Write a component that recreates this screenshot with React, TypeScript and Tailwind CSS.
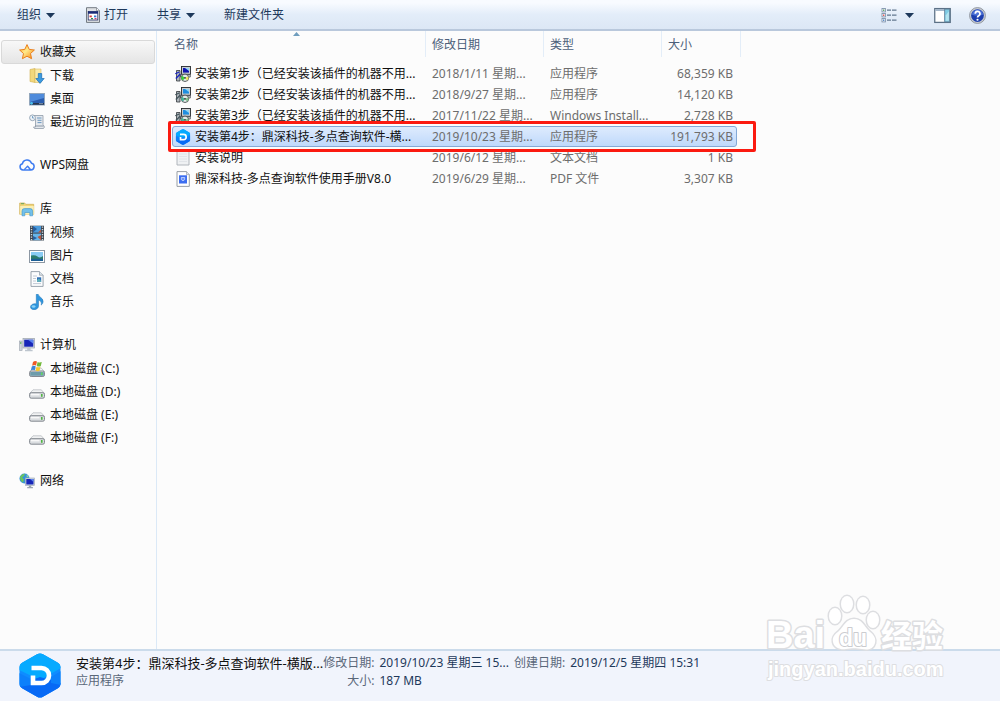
import type { ReactNode } from 'react'
import clsx from 'clsx'

type IconProps = { className?: string }

function Svg({ className = 'size-4', children }: IconProps & { children: ReactNode }) {
  return (
    <svg viewBox="0 0 16 16" className={clsx('shrink-0', className)} aria-hidden="true">
      {children}
    </svg>
  )
}

function Caret() {
  return (
    <svg viewBox="0 0 9 5" className="h-[5px] w-[9px] shrink-0" aria-hidden="true">
      <path d="M0 0h9L4.5 5z" fill="#1e395b" />
    </svg>
  )
}

const StarIcon = () => (
  <Svg>
    <defs>
      <linearGradient id="star" x1="0" y1="0" x2="1" y2="1">
        <stop offset="0" stopColor="#ffb52e" />
        <stop offset=".45" stopColor="#ffe98a" />
        <stop offset="1" stopColor="#f57f0a" />
      </linearGradient>
    </defs>
    <path d="M8 .6l2.2 4.8 5.2.6-3.9 3.5 1.1 5.2L8 12.2l-4.6 2.5 1.1-5.2L.6 6l5.2-.6z" fill="url(#star)" stroke="#ea7f1c" strokeWidth="1" strokeLinejoin="round" />
  </Svg>
)

const DownloadIcon = () => (
  <Svg>
    <path d="M1 1.5l5-1v14l-5-1z" fill="#f3d87c" stroke="#d2b04e" strokeWidth=".6" />
    <path d="M6 1h6v13.5H6z" fill="#f9e9a8" stroke="#d8bc62" strokeWidth=".6" />
    <path d="M9.3 5.5h3.4v5h2.5L11 15.4l-4.2-4.9h2.5z" fill="#3d9be0" stroke="#1b6fb8" strokeWidth=".7" />
  </Svg>
)

const DesktopIcon = () => (
  <Svg>
    <rect x=".5" y="2.5" width="15" height="11.5" fill="#2a5dae" stroke="#92a6bc" />
    <path d="M1 3h14v4L1 11z" fill="#4f8bdb" />
    <path d="M1 12h14v1.7H1z" fill="#27364c" />
    <circle cx="2.5" cy="12.3" r="1.4" fill="#4dc1ee" />
    <path d="M10 12.6h4" stroke="#9fb6d0" strokeWidth=".7" />
  </Svg>
)

const RecentIcon = () => (
  <Svg>
    <path d="M4.5 1.5h9.5v9l1.5 2.5-1 1.5H5.5l-1-1.5h2V6z" fill="#e4e8ed" stroke="#8f9ba8" strokeWidth=".8" />
    <path d="M8 4h4.5M8.5 6.3h4M8.5 8.6h4" stroke="#6a98c0" />
    <path d="M6 12h8.5" stroke="#8996a5" />
    <circle cx="3.5" cy="3.8" r="2.9" fill="#edf3f8" stroke="#8496a8" strokeWidth=".8" />
    <path d="M3.5 2v2H5" stroke="#4f85b5" strokeWidth=".7" fill="none" />
  </Svg>
)

const CloudIcon = () => (
  <Svg>
    <path d="M8.6 9.2l3.2 3.7H4a3.1 3.1 0 0 1-.6-6.1A4.7 4.7 0 0 1 12.5 6.2a3.4 3.4 0 0 1-.7 6.7" fill="none" stroke="#3e7cf0" strokeWidth="1.5" strokeLinejoin="round" strokeLinecap="round" />
    <path d="M5.2 12.6L8.6 9.2" fill="none" stroke="#3e7cf0" strokeWidth="1.3" />
  </Svg>
)

const LibraryIcon = () => (
  <Svg>
    <path d="M.7 2h5l1 1.3h8v10H.7z" fill="#f0d477" stroke="#cfae50" strokeWidth=".7" />
    <path d="M1.2 5h13.6v8.5H1.2z" fill="#faeeb4" />
    <path d="M2 2.7h3" stroke="#65a45b" />
    <path d="M3 14.8V10q0-2.4 2.4-2.4h5.8Q13.6 7.6 13.6 10v4.8h-2.8v-3.3H5.8v3.3z" fill="#73c0ea" stroke="#3a91c8" strokeWidth=".6" />
  </Svg>
)

const VideoIcon = () => (
  <Svg>
    <rect x="1" y=".7" width="14" height="14.8" fill="#3e4650" />
    <rect x="4" y="1" width="8" height="6.6" fill="#4b9bdc" />
    <rect x="4" y="8.6" width="8" height="6.6" fill="#67b5e8" />
    <path d="M4 1l4 3-4 3.6zM4 15.2V11l4 2z" fill="#275e9e" />
    <path d="M9 7.6l3-3v3zM8.5 12l3.5-2v5.2z" fill="#b8573f" />
    <path d="M2.5 1.5v14M13.5 1.5v14" stroke="#cfd9e0" strokeWidth="1.4" strokeDasharray="1.2 1.3" />
  </Svg>
)

const PictureIcon = () => (
  <Svg>
    <rect x=".5" y="2.5" width="15" height="12" fill="#fff" stroke="#8c97a3" />
    <rect x="2" y="4" width="12" height="9" fill="#8accf4" />
    <path d="M2 7.5q4-1 6.5 1T14 8v5H2z" fill="#2d7d6d" />
    <path d="M2 10.8h12V13H2z" fill="#1c5f95" />
  </Svg>
)

const DocumentIcon = () => (
  <Svg>
    <path d="M2 .6h8.5l3.6 3.6v11.2H2z" fill="#fbfcfd" stroke="#8f9aa5" strokeWidth=".9" />
    <path d="M10.5.6v3.6h3.6" fill="#dde4ea" stroke="#8f9aa5" strokeWidth=".7" />
    <path d="M4 5h4M4 7.5h3M4 10h3M4 12.6h8" stroke="#b4bdc9" strokeWidth=".8" />
    <rect x="8" y="6.3" width="4.2" height="4.4" fill="#2f6eb5" />
    <path d="M8 9l2-1.6L12.2 10v.7H8z" fill="#5cb1b9" />
  </Svg>
)

const MusicIcon = () => (
  <Svg>
    <path d="M7.3.3h1.9c.2 2.6 4.9 3.4 4.9 7 0 1.7-.8 2.9-1.9 3.8.8-3-.8-4.3-2.7-5V12c0 2-1.9 3.7-4.4 3.7-2.1 0-3.6-1.1-3.6-2.7 0-2 2.3-3.5 4.8-3.3l1 .2z" fill="#2f96de" stroke="#1d6fb0" strokeWidth=".5" />
    <ellipse cx="4.6" cy="12.5" rx="1.9" ry="1.2" fill="#8bd1f6" />
  </Svg>
)

const ComputerIcon = () => (
  <Svg>
    <rect x=".5" y="4" width="2.6" height="9.5" fill="#cfd5dc" stroke="#98a1ac" strokeWidth=".6" />
    <path d="M1.8 5v2" stroke="#54b553" />
    <rect x="4" y="1.5" width="11.5" height="9.5" fill="#d5dbe1" stroke="#98a1ac" strokeWidth=".7" />
    <rect x="5.2" y="2.7" width="9.1" height="7" fill="#1726b8" />
    <path d="M9 2.7h5.3v4z" fill="#5b83ee" />
    <path d="M8.2 11h3.4v1.7h2v1.5H6v-1.5h2.2z" fill="#bdc5ce" />
  </Svg>
)

const DiskBody = () => (
  <>
    <path d="M4 5.8h8.3l3.1 3.6H.8z" fill="#f1f2f3" stroke="#a6abb1" strokeWidth=".6" />
    <rect x=".6" y="8.7" width="14.9" height="5.5" rx="1.6" fill="#dadde0" stroke="#777d85" strokeWidth=".9" />
    <path d="M2 10.6h8.5" stroke="#f8f8f8" strokeWidth="1.5" />
    <rect x="12" y="10" width="1.6" height="2.8" fill="#50b542" />
  </>
)

const DiskIcon = () => (
  <Svg>
    <DiskBody />
  </Svg>
)

const SystemDiskIcon = () => (
  <Svg>
    <g transform="translate(0 1.3)">
      <DiskBody />
    </g>
    <path d="M1.2 11h13.6v3.8H1.2z" fill="#6d9cab" />
    <path d="M12 11.5h1.6v2.4H12z" fill="#62d65e" />
    <path d="M4 .9q2.1-1.5 4-.3l-1 4q-1.8-1-3.9.1z" fill="#ee5a26" />
    <path d="M8.6 1q2 1 4.2.1l-1.1 4.1q-2 .8-4-.3z" fill="#72b93a" />
    <path d="M2.8 5.4q2-1.2 3.9-.1l-.9 3.9q-1.9-1.1-3.9 0z" fill="#3c85d8" />
    <path d="M7.5 5.7q1.9 1 4 .2l-1 3.9q-2 .8-3.9-.2z" fill="#f8c72c" />
  </Svg>
)

const NetworkIcon = () => (
  <Svg>
    <circle cx="5.5" cy="5.5" r="5" fill="#3793d9" />
    <path d="M1 4q2-3.5 5-3.2L5 3 3 4.5l2 2-1 3Q1 8 1 4z" fill="#6cc65b" />
    <path d="M7.5 1.5l2.3 2-2 .8z" fill="#9ce08d" />
    <rect x="6.3" y="5" width="9.2" height="7.5" fill="#d3dae2" stroke="#98a3af" strokeWidth=".6" />
    <rect x="7.3" y="6" width="7.2" height="5.5" fill="#1726b8" />
    <path d="M11 6h3.5v3z" fill="#5b83ee" />
    <path d="M9.8 12.5h2.4V14h1.7v1.3H8.2V14h1.6z" fill="#9aa5b1" />
  </Svg>
)

const SetupIcon = ({ muted }: { muted?: boolean }) => (
  <Svg>
    <rect x="6.5" y=".5" width="9" height="7.8" fill="#c9ced2" stroke="#25292d" strokeWidth=".9" />
    <rect x="8" y="2" width="6" height="4.6" fill={muted ? '#1f8ee0' : '#1215b0'} />
    <path d="M10 2h4v3z" fill="#8fd6f5" />
    <path d="M5.5 8.7h9.8V11H5.5z" fill="#dfe3e5" stroke="#33383c" strokeWidth=".7" />
    <path d="M1.5 4.5H5V15H1.5z" fill="#aeb5ba" stroke="#33383c" strokeWidth=".8" />
    <path d="M.3 7.8l4-1.8M.8 12.5L5.3 8" stroke={muted ? '#43555c' : '#1721c8'} strokeWidth="1.2" />
    <circle cx="10" cy="11.8" r="3.7" fill="#e3ebe9" stroke="#33383c" strokeWidth=".8" />
    <path d="M10 11.8L7 9.7A3.5 3.5 0 0 0 8 14.6z" fill={muted ? '#48b39a' : '#3ccf3e'} />
    <path d="M10 11.8l3.3-1.2a3.5 3.5 0 0 1-1.3 4z" fill={muted ? '#7fbf86' : '#efe15a'} />
    <circle cx="10" cy="11.8" r=".9" fill="#333" />
  </Svg>
)

const TextFileIcon = () => (
  <Svg>
    <path d="M2 1h12v14H2z" fill="#eff1f3" stroke="#a9afb5" strokeWidth=".9" />
    <path d="M4 4h8M4 6.5h8M4 9h8M4 11.5h8" stroke="#dde1e5" strokeWidth=".8" />
  </Svg>
)

const PdfIcon = () => (
  <Svg>
    <path d="M2 .6h9.5l2.8 3v11.8H2z" fill="#fff" stroke="#8d949c" strokeWidth=".9" />
    <path d="M11.5.6v3h2.8" fill="#dfe3e8" stroke="#8d949c" strokeWidth=".6" />
    <rect x="4" y="4.3" width="8" height="8.2" fill="#3c6df0" />
    <path d="M6.3 6.5h3.4v2.1L8 9.9 6.3 8.6z" fill="#6e93f6" stroke="#dfe8ff" strokeWidth=".7" />
  </Svg>
)

function HexLogo({ className = 'size-4', id }: IconProps & { id: string }) {
  return (
    <svg viewBox="0 0 42 45" className={clsx('shrink-0', className)} aria-hidden="true">
      <defs>
        <clipPath id={id}>
          <path d="M18 1.3q3-1.7 6 0l14.5 8.2q3 1.7 3 5v16q0 3.3-3 5L24 43.7q-3 1.7-6 0L3.5 35.5q-3-1.7-3-5v-16q0-3.3 3-5z" />
        </clipPath>
      </defs>
      <g clipPath={`url(#${id})`}>
        <path d="M0 0h42v45H0z" fill="#0f8cff" />
        <path d="M0 0h42v15L21 27 0 17z" fill="#06aaff" />
        <path d="M0 32l21-8 21 6v15H0z" fill="#0769f5" />
        <path d="M0 20l12 6v6L0 34zM42 18l-10 6v6l10 2z" fill="#0c80fb" />
      </g>
      <path d="M12.5 15h10a7.5 7.5 0 0 1 0 15H14v-7.5" fill="none" stroke="#fff" strokeWidth="4.6" />
    </svg>
  )
}

const OpenIcon = () => (
  <Svg>
    <path d="M1.5.7h10l3 3v11.7h-13z" fill="#dfe2e5" stroke="#737a82" />
    <path d="M11.5.7v3h3" fill="#fff" stroke="#737a82" strokeWidth=".7" />
    <rect x="3.2" y="4.5" width="9.6" height="8.5" fill="#fff" stroke="#1f2c63" strokeWidth=".8" />
    <path d="M3 4.5h10v2.2H3z" fill="#1a2a78" />
    <path d="M4.5 8.5h2.3v1.8H4.5z" fill="#d43c3c" />
    <path d="M9 8.5h2.3v1.8H9z" fill="#3577d8" />
    <path d="M6 11h2v1.3H6z" fill="#2b8d50" />
    <path d="M9.5 11h2v1.3h-2z" fill="#cb3a73" />
  </Svg>
)

const ViewIcon = () => (
  <Svg>
    {[1.5, 6.5, 11.5].map((y, i) => (
      <g key={y}>
        <rect x="1" y={y} width="3.4" height="3.4" fill="#fff" stroke="#7f93ac" strokeWidth=".9" />
        <rect x="2" y={y + 1} width="1.4" height="1.4" fill={['#55a05b', '#df4848', '#4a7fc2'][i]} />
        <path d={`M6 ${y + 1.7}h4M11 ${y + 1.7}h4.5`} stroke="#63788f" strokeWidth="1.2" />
      </g>
    ))}
  </Svg>
)

const PaneIcon = () => (
  <Svg className="size-[17px]">
    <rect x=".7" y="1.5" width="14.6" height="13" fill="#fff" stroke="#5c7186" strokeWidth="1.2" />
    <path d="M1.2 2h13.6v1.7H1.2z" fill="#9fb3c7" />
    <path d="M10 2h4.7v12H10z" fill="#7fcbe3" stroke="#5c7c95" strokeWidth=".8" />
    <path d="M11 8l3-4v9h-3z" fill="#b4e4f0" />
  </Svg>
)

const HelpIcon = () => (
  <Svg className="size-[17px]">
    <circle cx="8" cy="8" r="7.5" fill="#c8ccd2" stroke="#898f98" strokeWidth=".8" />
    <circle cx="8" cy="8" r="6" fill="#1d3fae" />
    <path d="M2.6 7a5.5 5.5 0 0 1 10.8 0Q8 9.5 2.6 7z" fill="#4a70d6" />
    <path d="M5.9 6.3a2.2 2.2 0 1 1 3.3 1.9Q8 8.9 8 9.8" fill="none" stroke="#fff" strokeWidth="1.6" />
    <circle cx="8" cy="12" r="1" fill="#fff" />
  </Svg>
)

type NavItem = { label: string; icon: ReactNode }

const groups: { head: NavItem; items: NavItem[] }[] = [
  {
    head: { label: '收藏夹', icon: <StarIcon /> },
    items: [
      { label: '下载', icon: <DownloadIcon /> },
      { label: '桌面', icon: <DesktopIcon /> },
      { label: '最近访问的位置', icon: <RecentIcon /> },
    ],
  },
  { head: { label: 'WPS网盘', icon: <CloudIcon /> }, items: [] },
  {
    head: { label: '库', icon: <LibraryIcon /> },
    items: [
      { label: '视频', icon: <VideoIcon /> },
      { label: '图片', icon: <PictureIcon /> },
      { label: '文档', icon: <DocumentIcon /> },
      { label: '音乐', icon: <MusicIcon /> },
    ],
  },
  {
    head: { label: '计算机', icon: <ComputerIcon /> },
    items: [
      { label: '本地磁盘 (C:)', icon: <SystemDiskIcon /> },
      { label: '本地磁盘 (D:)', icon: <DiskIcon /> },
      { label: '本地磁盘 (E:)', icon: <DiskIcon /> },
      { label: '本地磁盘 (F:)', icon: <DiskIcon /> },
    ],
  },
  { head: { label: '网络', icon: <NetworkIcon /> }, items: [] },
]

const files = [
  { name: '安装第1步（已经安装该插件的机器不用...', date: '2018/1/11 星期...', type: '应用程序', size: '68,359 KB', icon: <SetupIcon /> },
  { name: '安装第2步（已经安装该插件的机器不用...', date: '2018/9/27 星期...', type: '应用程序', size: '14,120 KB', icon: <SetupIcon muted /> },
  { name: '安装第3步（已经安装该插件的机器不用...', date: '2017/11/22 星期...', type: 'Windows Install...', size: '2,728 KB', icon: <SetupIcon muted /> },
  { name: '安装第4步：鼎深科技-多点查询软件-横...', date: '2019/10/23 星期...', type: '应用程序', size: '191,793 KB', icon: <HexLogo id="hex-row" />, selected: true },
  { name: '安装说明', date: '2019/6/12 星期...', type: '文本文档', size: '1 KB', icon: <TextFileIcon /> },
  { name: '鼎深科技-多点查询软件使用手册V8.0', date: '2019/6/29 星期...', type: 'PDF 文件', size: '3,307 KB', icon: <PdfIcon /> },
]

function Toolbar() {
  return (
    <header className="flex h-[31px] shrink-0 items-center justify-between border-b-2 border-[#b9c8dc] bg-linear-to-b from-[#f8fbff] from-10% via-[#e3edf9] via-50% to-[#dce7f5] pt-px pr-[14px] pl-[17px] text-[#1e395b]">
      <div className="flex items-center">
        <button className="mr-[30px] flex items-center gap-[5px]">组织 <Caret /></button>
        <button className="mr-[29px] flex items-center gap-[3px]"><OpenIcon />打开</button>
        <button className="mr-[29px] flex items-center gap-[5px]">共享 <Caret /></button>
        <button>新建文件夹</button>
      </div>
      <div className="flex items-center">
        <button className="mr-5 flex items-center gap-2" aria-label="更改视图"><ViewIcon /><Caret /></button>
        <button className="mr-[18px]" aria-label="显示预览窗格"><PaneIcon /></button>
        <button aria-label="帮助"><HelpIcon /></button>
      </div>
    </header>
  )
}

function Sidebar() {
  return (
    <nav className="flex w-[157px] shrink-0 flex-col gap-5 border-r border-[#dbe9f7] pt-[9px] pr-px pl-px">
      {groups.map(({ head, items }, i) => (
        <ul key={head.label}>
          <li>
            <a
              href="#"
              className={clsx(
                'flex h-6 items-center gap-[5px] rounded-[3px] border pl-[17px]',
                i === 0 ? 'border-[#d9d9d9] bg-linear-to-b from-[#f8f8f8] to-[#e5e5e5]' : 'border-transparent',
              )}
            >
              {head.icon}
              {head.label}
            </a>
          </li>
          {items.map((item) => (
            <li key={item.label}>
              <a href="#" className="flex h-[23px] items-center gap-[5px] pl-7">
                {item.icon}
                {item.label}
              </a>
            </li>
          ))}
        </ul>
      ))}
    </nav>
  )
}

function FileTable() {
  const head = 'h-[26px] w-full border-r border-[#e3edf8] pt-[2px] text-left'

  return (
    <table className="ml-[15px] w-[569px] table-fixed border-collapse text-[#6d6d6d]">
      <thead className="text-[#4c607a]">
        <tr className="h-8 align-top">
          <th className="relative w-[254px] p-0 font-normal">
            <button className={clsx(head, 'pl-[2px]')}>名称</button>
            <svg viewBox="0 0 7 4" className="absolute top-px left-[121px] h-1 w-[7px]" aria-hidden="true">
              <path d="M3.5 0L7 4H0z" fill="#6f9dbd" />
            </svg>
          </th>
          <th className="w-[118px] p-0 font-normal"><button className={clsx(head, 'pl-[6px]')}>修改日期</button></th>
          <th className="w-[118px] p-0 font-normal"><button className={clsx(head, 'pl-[6px]')}>类型</button></th>
          <th className="p-0 font-normal"><button className={clsx(head, 'pl-[6px]')}>大小</button></th>
        </tr>
      </thead>
      <tbody>
        {files.map((file) => (
          <tr key={file.name} className="relative h-[21px] whitespace-nowrap">
            <td className="p-0 text-[#111]">
              {file.selected && (
                <>
                  <span className="absolute inset-y-0 right-1 left-0 rounded-[3px] border border-[#84a9d6] bg-linear-to-b from-[#deebfd] to-[#bfd9fb]" />
                  <span className="absolute -inset-y-[5px] -right-[15px] -left-1 z-10 rounded-[2px] border-3 border-[#fb1a10]" />
                </>
              )}
              <span className="relative flex items-center gap-1 pl-[3px]">
                {file.icon}
                {file.name}
              </span>
            </td>
            <td className="relative p-0 pl-[6px]">{file.date}</td>
            <td className="relative p-0 pl-[6px]">{file.type}</td>
            <td className="relative p-0 pr-2 text-right">{file.size}</td>
          </tr>
        ))}
      </tbody>
    </table>
  )
}

function Details() {
  return (
    <footer className="flex h-[52px] shrink-0 items-start border-t-2 border-[#cbdbeb] bg-[#f1f4fc] pt-[2px] pl-[19px] leading-[18px]">
      <HexLogo id="hex-large" className="h-[45px] w-[42px]" />
      <div className="ml-[15px] pt-px whitespace-nowrap">
        <p className="text-[13px] text-[#111]">安装第4步：鼎深科技-多点查询软件-横版...</p>
        <p className="text-[#5a6779]">应用程序</p>
      </div>
      <dl className="grid grid-cols-[auto_auto_auto_auto] gap-x-[5px] pt-px whitespace-nowrap text-[#1e395b] [&_dt]:text-right [&_dt]:text-[#5a6779]">
        <dt>修改日期:</dt>
        <dd>2019/10/23 星期三 15...</dd>
        <dt>创建日期:</dt>
        <dd>2019/12/5 星期四 15:31</dd>
        <dt>大小:</dt>
        <dd>187 MB</dd>
      </dl>
    </footer>
  )
}

function Watermark() {
  return (
    <svg
      viewBox="0 0 190 95"
      className="pointer-events-none absolute right-[47px] bottom-4 h-[95px] w-[190px] font-['Liberation_Sans','Noto_Sans_CJK_SC',sans-serif] font-bold"
      fill="#fff"
      stroke="#dddee1"
      strokeWidth="3"
      strokeLinejoin="round"
      paintOrder="stroke"
      role="img"
      aria-label="Baidu 经验"
    >
      <text x="3" y="58" fontSize="38">Bai</text>
      <ellipse cx="72" cy="26" rx="6" ry="8" />
      <ellipse cx="84" cy="14" rx="6" ry="8" />
      <ellipse cx="100" cy="15" rx="6" ry="8" />
      <ellipse cx="110" cy="30" rx="6" ry="8" />
      <path d="M91 29c8 0 10 7 15 12 5 4 7 7 6 12-2 7-8 7-13 6-6-1-10-1-16 0-5 1-12-1-13-7-1-5 2-8 6-11 5-5 7-12 15-12z" />
      <text x="76" y="56" fontSize="23" stroke="#cbccd0" strokeWidth="2">du</text>
      <text x="118" y="57" fontSize="31">经验</text>
      <text x="5" y="86" fontSize="20" strokeWidth="2">jingyan.baidu.com</text>
    </svg>
  )
}

export default function App() {
  return (
    <div
      lang="zh-CN"
      className="relative flex min-h-screen flex-col overflow-hidden bg-[#fcfcfc] font-['Noto_Sans','Noto_Sans_CJK_SC',sans-serif] text-xs text-[#111]"
    >
      <Toolbar />
      <div className="flex flex-1">
        <Sidebar />
        <main className="flex-1">
          <FileTable />
        </main>
      </div>
      <Details />
      <Watermark />
    </div>
  )
}
